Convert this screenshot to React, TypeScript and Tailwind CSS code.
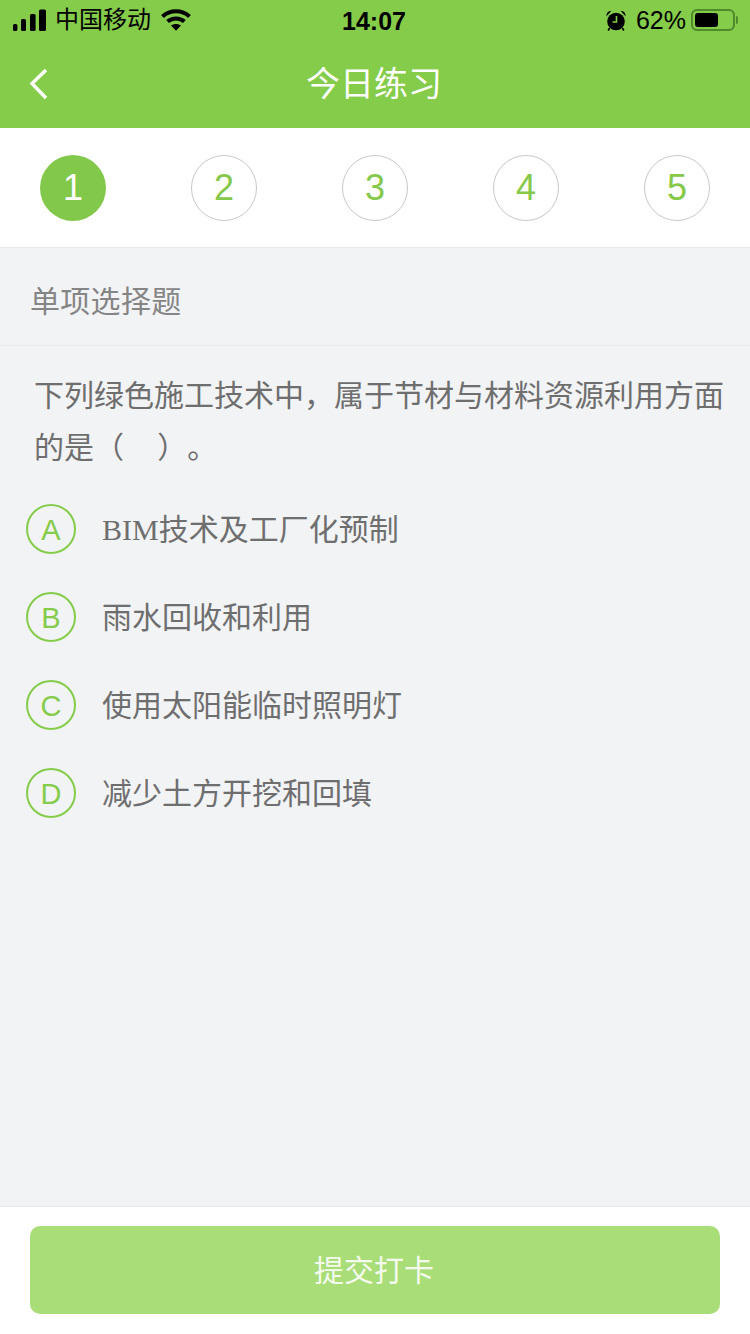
const cjk = "font-['Liberation_Sans','Noto_Sans_CJK_SC',sans-serif]";

const options = [
  { key: "A", text: "BIM技术及工厂化预制", serif: true },
  { key: "B", text: "雨水回收和利用" },
  { key: "C", text: "使用太阳能临时照明灯" },
  { key: "D", text: "减少土方开挖和回填" },
];

function Signal() {
  return (
    <svg width="34" height="22" viewBox="0 0 34 22" fill="#000">
      <rect x="0" y="15" width="4.4" height="7" rx="1.5" />
      <rect x="8" y="10" width="5" height="12" rx="1.5" />
      <rect x="17" y="5" width="5.6" height="17" rx="1.5" />
      <rect x="26" y="0.6" width="7" height="21.4" rx="1.5" />
    </svg>
  );
}

function Wifi() {
  return (
    <svg width="30" height="22" viewBox="0 0 30 22" fill="none" stroke="#000" strokeWidth="4">
      <path d="M1.5 7.4C9 0.6 21 0.6 28.5 7.4" />
      <path d="M6.6 12.6C11.3 8.4 18.7 8.4 23.4 12.6" />
      <path d="M15 21.8L10 16.4C13 14.4 17 14.4 20 16.4Z" fill="#000" stroke="none" />
    </svg>
  );
}

function Alarm() {
  return (
    <svg width="20" height="21" viewBox="0 0 20 21" fill="#000">
      <circle cx="10" cy="11.5" r="8.8" />
      <path d="M0.6 6.2C0.2 3 2.2 0.8 5.2 1Z" />
      <path d="M19.4 6.2C19.8 3 17.8 0.8 14.8 1Z" />
      <path d="M3.6 18L2.2 20.5M16.4 18L17.8 20.5" stroke="#000" strokeWidth="1.6" />
      <path d="M10.5 6V12H6.5" fill="none" stroke="#85cc4a" strokeWidth="1.6" />
    </svg>
  );
}

function Battery() {
  return (
    <div className="flex items-center gap-[1px]">
      <div className="flex h-[22px] w-[44px] items-center rounded-[6px] border-2 border-[#4f8a2b] p-[2px]">
        <div className="h-full w-[23px] rounded-[3px] bg-black" />
      </div>
      <div className="h-[8px] w-[2px] rounded-r-full bg-[#4f8a2b]" />
    </div>
  );
}

export default function App() {
  return (
    <div className={`flex h-[1334px] w-[750px] flex-col overflow-hidden bg-[#f2f3f5] ${cjk}`}>
      <header className="h-[128px] shrink-0 bg-[#85cc4a]">
        <div className="relative flex h-[40px] items-center justify-between pl-[13px] pr-[12px] text-black">
          <div className="flex items-center">
            <Signal />
            <span className="ml-[8px] text-[24px] leading-[40px]">中国移动</span>
            <span className="ml-[10px]">
              <Wifi />
            </span>
          </div>
          <span className="absolute left-[342px] top-0 text-[25px] font-bold leading-[42px]">14:07</span>
          <div className="flex items-center">
            <span className="mr-[10px]">
              <Alarm />
            </span>
            <span className="mr-[5px] text-[25px] leading-[42px]">62%</span>
            <Battery />
          </div>
        </div>
        <div className="relative flex h-[88px] w-full justify-center">
          <svg className="absolute left-[28px] top-[27px]" width="22" height="34" viewBox="0 0 22 34" fill="none" stroke="#fff" strokeWidth="3.4">
            <path d="M18 3L4 16.5L18 31" />
          </svg>
          <span className="pr-[2px] pt-[22px] text-[34px] leading-[44px] text-white">今日练习</span>
        </div>
      </header>

      <div className="flex h-[120px] shrink-0 items-start justify-between border-b border-[#e8e8e8] bg-white px-[40px] pt-[27px]">
        {[1, 2, 3, 4, 5].map((n) => (
          <div
            key={n}
            className={
              n === 1
                ? "flex h-[66px] w-[66px] items-center justify-center rounded-full bg-[#82c84a] text-[36px] text-white"
                : "flex h-[66px] w-[66px] items-center justify-center rounded-full border border-[#c8c8c8] text-[36px] text-[#85c84a]"
            }
          >
            {n}
          </div>
        ))}
      </div>

      <div className="flex h-[98px] shrink-0 items-center border-b border-[#eaeaec] pl-[30px] pt-[10px] text-[30px] tracking-[0.3px] text-[#858585]">
        单项选择题
      </div>

      <div className="pl-[34px] pr-[20px] pt-[24px] text-[30px] leading-[52px] text-[#6e6e6e] [text-spacing-trim:space-all]">
        下列绿色施工技术中，属于节材与材料资源利用方面的是（&nbsp;&nbsp;&nbsp;&nbsp;）。
      </div>

      <div className="mt-[11px] flex flex-col">
        {options.map((o) => (
          <div key={o.key} className="flex h-[88px] items-center pl-[26px]">
            <div className="flex h-[50px] w-[50px] items-center justify-center rounded-full border-2 border-[#85cc4a] pt-[4px] text-[29px] text-[#85cc4a]">
              {o.key}
            </div>
            <span
              className={
                o.serif
                  ? "ml-[26px] font-['Liberation_Serif','Noto_Sans_CJK_SC',serif] text-[30px] text-[#6e6e6e]"
                  : "ml-[26px] text-[30px] text-[#6e6e6e]"
              }
            >
              {o.text}
            </span>
          </div>
        ))}
      </div>

      <div className="mt-auto h-[128px] shrink-0 border-t border-[#e8e8e8] bg-white px-[30px] pt-[19px]">
        <button className="flex h-[88px] w-full items-center justify-center rounded-[10px] bg-[#a9dd78] pr-[2px] text-[30px] text-[#f4fbee]">
          提交打卡
        </button>
      </div>
    </div>
  );
}
